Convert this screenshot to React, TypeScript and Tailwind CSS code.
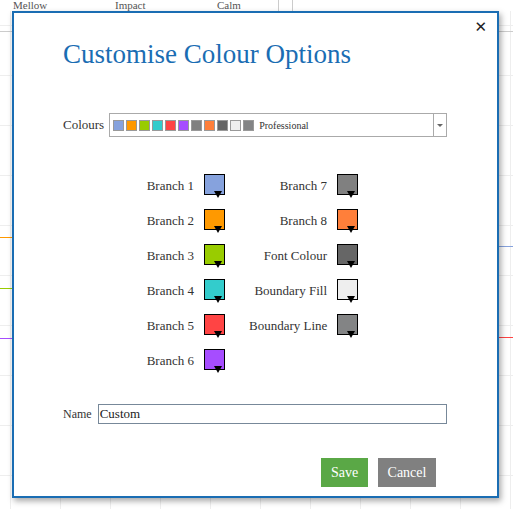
import React from 'react';

const serif = { fontFamily: '"Liberation Serif", "DejaVu Serif", serif' };

const palette = ['#86a2dd', '#ff9900', '#99cc00', '#33cccc', '#ff4444', '#a64dff', '#808080', '#ff7f3a', '#666666', '#eeeeee', '#838485'];

const left = [
  ['Branch 1', '#86a2dd'],
  ['Branch 2', '#ff9900'],
  ['Branch 3', '#99cc00'],
  ['Branch 4', '#33cccc'],
  ['Branch 5', '#ff4444'],
  ['Branch 6', '#a64dff'],
];
const right = [
  ['Branch 7', '#808080'],
  ['Branch 8', '#ff7f3a'],
  ['Font Colour', '#666666'],
  ['Boundary Fill', '#eeeeee'],
  ['Boundary Line', '#838485'],
];

function Swatch({ color }: { color: string }) {
  return (
    <div className="relative h-[21px] w-[21px] border border-black" style={{ background: color }}>
      <div className="absolute -bottom-[4px] right-[2px] h-0 w-0 border-l-[4px] border-r-[4px] border-t-[7px] border-l-transparent border-r-transparent border-t-black" />
    </div>
  );
}

function Row({ label, color, w }: { label: string; color: string; w: string }) {
  return (
    <div className="flex h-[35px] items-start gap-[10px]">
      <div className={`${w} whitespace-nowrap pt-[2px] text-right text-[13px] text-[#333]`}>{label}</div>
      <Swatch color={color} />
    </div>
  );
}

export default function App() {
  return (
    <div className="relative h-[509px] w-[513px] overflow-hidden bg-white" style={serif}>
      {/* background page */}
      <div className="absolute inset-0 bg-[linear-gradient(#eeeeee_1px,transparent_1px),linear-gradient(90deg,#eeeeee_1px,transparent_1px)] bg-[length:50px_50px] bg-[position:10px_-25px]" />
      <div className="absolute left-0 top-0 h-[11px] w-[513px] bg-white text-[11px] leading-[10px] text-[#555]">
        <span className="absolute left-[13px] top-0">Mellow</span>
        <span className="absolute left-[115px] top-0">Impact</span>
        <span className="absolute left-[217px] top-0">Calm</span>
      </div>
      <div className="absolute left-0 top-[31px] h-px w-full bg-[#ccc]" />
      <div className="absolute left-[278px] top-0 h-[11px] w-px bg-[#ccc]" />
      <div className="absolute left-[292px] top-0 h-[11px] w-px bg-[#ccc]" />
      <div className="absolute left-0 top-[237px] h-px w-[12px] bg-[#ff9900]" />
      <div className="absolute left-0 top-[288px] h-px w-[12px] bg-[#99cc00]" />
      <div className="absolute left-0 top-[338px] h-px w-[12px] bg-[#a64dff]" />
      <div className="absolute right-0 top-[246px] h-px w-[15px] bg-[#86a2dd]" />
      <div className="absolute right-0 top-[337px] h-px w-[15px] bg-[#ff4444]" />

      {/* dialog */}
      <div className="absolute left-[12px] top-[11px] flex h-[487px] w-[487px] flex-col border-2 border-[#1a6db3] bg-white pl-[49px] pr-[50px] shadow-[2px_3px_6px_rgba(0,0,0,0.35)]">
        <div className="absolute right-[10px] top-[3px] text-[15px] font-bold text-[#222]" style={{ fontFamily: '"DejaVu Sans", sans-serif' }}>✕</div>
        <h1 className="mt-[26px] text-[27px] leading-[30px] text-[#1a6db3]">Customise Colour Options</h1>

        <div className="mt-[44px] flex items-center gap-[5px]">
          <span className="text-[13px] text-[#333]">Colours</span>
          <div className="flex h-[24px] flex-1 items-center border border-[#aaa] pl-[3px]">
            <div className="flex gap-[2px]">
              {palette.map((c, i) => (
                <div key={i} className="h-[11px] w-[11px] border border-[#999]" style={{ background: c }} />
              ))}
            </div>
            <span className="ml-[5px] flex-1 text-[10px] text-[#333]">Professional</span>
            <div className="flex h-full w-[13px] items-center justify-center border-l border-[#aaa]">
              <div className="h-0 w-0 border-l-[3px] border-r-[3px] border-t-[3px] border-l-transparent border-r-transparent border-t-[#666]" />
            </div>
          </div>
        </div>

        <div className="mt-[37px] flex pl-[75px]">
          <div className="flex flex-col">
            {left.map(([l, c]) => <Row key={l} label={l} color={c} w="w-[56px]" />)}
          </div>
          <div className="ml-[24px] flex flex-col">
            {right.map(([l, c]) => <Row key={l} label={l} color={c} w="w-[78px]" />)}
          </div>
        </div>

        <div className="mt-[20px] flex items-center gap-[6px]">
          <span className="text-[12px] text-[#333]">Name</span>
          <div className="flex h-[20px] w-[350px] items-center border border-[#778899] px-[1px] text-[13px] text-[#222]">Custom</div>
        </div>

        <div className="mt-[34px] flex justify-end gap-[10px] pr-[11px]">
          <button className="h-[29px] w-[47px] bg-[#5aa846] text-[14px] text-white" style={serif}>Save</button>
          <button className="h-[29px] w-[58px] bg-[#808080] text-[14px] text-white" style={serif}>Cancel</button>
        </div>
      </div>
    </div>
  );
}
